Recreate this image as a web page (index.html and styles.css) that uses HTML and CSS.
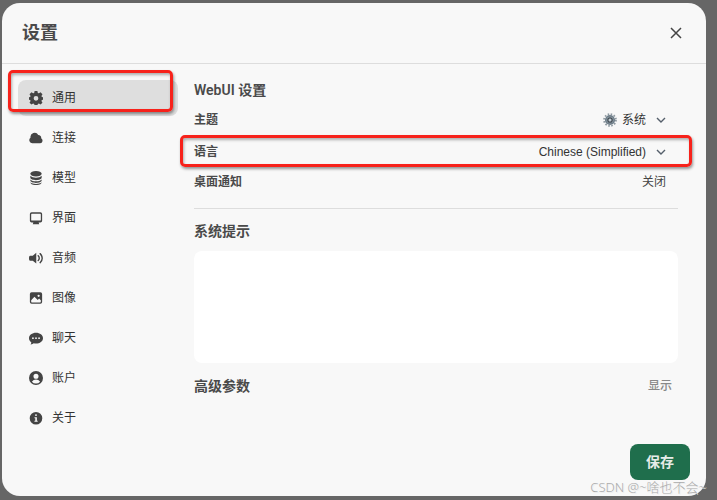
FILE: index.html
```html
<!DOCTYPE html>
<html lang="zh-CN">
<head>
    <meta charset="UTF-8">
    <meta name="viewport" content="width=device-width, initial-scale=1.0">
    <title>设置</title>
    <link rel="stylesheet" href="styles.css">
</head>
<body>
    <main class="modal">
        <header class="modal-header">
            <h1>设置</h1>
            <button class="close" type="button" aria-label="关闭">
                <svg viewBox="0 0 20 20" width="20" height="20"><path d="M5 5l10 10M15 5L5 15" fill="none" stroke="currentColor" stroke-width="1.500"/></svg>
            </button>
        </header>

        <div class="modal-body">
            <nav class="tabs">
                <button class="tab active" type="button">
                    <svg viewBox="0 0 16 16"><path fill-rule="evenodd" d="M6.400 0h3.200l.5 2.200 1.200.5L13.200 1.500l2.200 2.200-1.200 1.900.5 1.200 1.300.3v2.800l-1.300.3-.5 1.200 1.200 1.900-2.200 2.200-1.900-1.200-1.200.5-.5 1.700H6.400l-.5-1.700-1.200-.5-1.900 1.200-2.200-2.200 1.200-1.900-.5-1.200L0 9.900V7.100l1.300-.3.5-1.200L.6 3.700l2.200-2.200 1.900 1.200 1.200-.5zM8 5.700a2.700 2.700 0 1 0 0 5.400 2.700 2.700 0 0 0 0-5.400z"/></svg>
                    通用
                    <span class="mark mark-tab"></span>
                </button>
                <button class="tab" type="button">
                    <svg viewBox="0 0 16 16"><path d="M4 14a3.600 3.600 0 0 1-2.300-6.400A4.800 4.800 0 0 1 10.600 4.500a3.300 3.300 0 0 1 3.300 3.900A3 3 0 0 1 12.800 14z"/></svg>
                    连接
                </button>
                <button class="tab" type="button">
                    <svg viewBox="0 0 16 16"><ellipse cx="8" cy="3.200" rx="6.500" ry="3.200"/><path d="M1.500 5.500c2.500 3 10.500 3 13 0v2c0 4-13 4-13 0zM1.500 9.700c2.500 2.800 10.500 2.800 13 0v1c0 4-13 4-13 0zM1.500 12.900c2.500 2.500 10.500 2.500 13 0 0 4.200-13 4.200-13 0z"/></svg>
                    模型
                </button>
                <button class="tab" type="button">
                    <svg viewBox="0 0 16 16"><path fill-rule="evenodd" d="M3 1.500h10a2 2 0 0 1 2 2V11a2 2 0 0 1-2 2h-2l.7 2H4.300L5 13H3a2 2 0 0 1-2-2V3.500a2 2 0 0 1 2-2zm.2 1.700a.7.7 0 0 0-.7.7v6.300a.7.7 0 0 0 .7.7h9.600a.7.7 0 0 0 .7-.7V3.900a.7.7 0 0 0-.7-.7z"/></svg>
                    界面
                </button>
                <button class="tab" type="button">
                    <svg viewBox="0 0 16 16"><path d="M8.300 2v12.300L4.300 11H1.200C.4 11 0 9.800 0 8.200s.4-2.900 1.200-2.900h3.100z"/><path d="M10.500 5.500c1.600 1.500 1.600 3.800 0 5.300M12.700 3c3.200 3 3.200 7.300 0 10.300" fill="none" stroke="currentColor" stroke-width="1.600" stroke-linecap="round"/></svg>
                    音频
                </button>
                <button class="tab" type="button">
                    <svg viewBox="0 0 16 16"><path fill-rule="evenodd" d="M3 1.500h10a2 2 0 0 1 2 2v9a2 2 0 0 1-2 2H3a2 2 0 0 1-2-2v-9a2 2 0 0 1 2-2zm-.5 9.200v1.600c0 .4.300.7.700.7h9.600c.4 0 .7-.3.700-.7v-1.600l-2-2-1.500 1.500-3.800-3.600zM11 4.200A1.300 1.300 0 1 0 11 6.800 1.300 1.300 0 0 0 11 4.200z"/></svg>
                    图像
                </button>
                <button class="tab" type="button">
                    <svg viewBox="0 0 16 16"><path fill-rule="evenodd" d="M8 2c4.400 0 8 2.700 8 6.200s-3.600 6.200-8 6.200c-.9 0-1.700-.1-2.500-.3-1 .8-2.300 1.300-3.700 1.200.7-.8 1-1.700.8-2.500C1 11.700 0 10 0 8.200 0 4.700 3.600 2 8 2zM4.500 7.200a1 1 0 1 0 0 2 1 1 0 0 0 0-2zm3.500 0a1 1 0 1 0 0 2 1 1 0 0 0 0-2zm3.500 0a1 1 0 1 0 0 2 1 1 0 0 0 0-2z"/></svg>
                    聊天
                </button>
                <button class="tab" type="button">
                    <svg viewBox="0 0 16 16"><path fill-rule="evenodd" d="M8 0a8 8 0 1 1 0 16A8 8 0 0 1 8 0zm0 3a2.900 2.900 0 1 0 0 5.800A2.900 2.900 0 0 0 8 3zM3.300 12.200a6.300 6.300 0 0 0 9.400 0 5.800 5.800 0 0 0-9.400 0z"/></svg>
                    账户
                </button>
                <button class="tab" type="button">
                    <svg viewBox="0 0 16 16"><path fill-rule="evenodd" d="M8 1a7.200 7.200 0 1 1 0 14.400A7.200 7.200 0 0 1 8 1zm0 2.600a1.100 1.100 0 1 0 0 2.200 1.100 1.100 0 0 0 0-2.200zM6.300 7v1.200h.9v2.800h-1v1.200h3.700V11h-.9V7z"/></svg>
                    关于
                </button>
            </nav>

            <form class="panel">
                <div class="settings">
                    <h2>WebUI 设置</h2>
                    <div class="row">
                        <label for="theme">主题</label>
                        <div class="picker">
                            <svg class="gear" viewBox="0 0 16 16" width="14" height="14">
                                <circle cx="8" cy="8" r="6.800" fill="none" stroke="#8c979f" stroke-width="2" stroke-dasharray="1.780 1.780"/>
                                <circle cx="8" cy="8" r="4.800" fill="#a3b0ba" stroke="#71808b" stroke-width="2"/>
                                <circle cx="8" cy="8" r="2.500" fill="#c4ced5" stroke="#424c54" stroke-width="1.500"/>
                            </svg>
                            <select id="theme"><option>系统</option></select>
                            <svg class="chevron" viewBox="0 0 10 10" width="10" height="10"><path d="M1 3l4 4 4-4"/></svg>
                        </div>
                    </div>
                    <div class="row">
                        <label for="language">语言</label>
                        <div class="picker">
                            <select id="language"><option>Chinese (Simplified)</option></select>
                            <svg class="chevron" viewBox="0 0 10 10" width="10" height="10"><path d="M1 3l4 4 4-4"/></svg>
                        </div>
                        <span class="mark mark-row"></span>
                    </div>
                    <div class="row row-short">
                        <label for="notify">桌面通知</label>
                        <button class="toggle" id="notify" type="button">关闭</button>
                    </div>
                    <hr>
                    <h2><label for="prompt">系统提示</label></h2>
                    <textarea id="prompt"></textarea>
                    <div class="advanced">
                        <h2>高级参数</h2>
                        <button class="show" type="button">显示</button>
                    </div>
                </div>
                <button class="save" type="submit">保存</button>
            </form>
        </div>
    </main>
    <div class="watermark">CSDN @~啥也不会~</div>
</body>
</html>
```

FILE: styles.css
```css
* {
    box-sizing: border-box;
}

body {
    display: flex;
    min-height: 100vh;
    margin: 0;
    padding: 3px 11px 4px 2px;
    background: #666;
    color: #444;
    font-family: "Liberation Sans", "Noto Sans CJK SC", sans-serif;
    font-size: 12px;
    line-height: 20px;
}

button,
select,
textarea {
    padding: 0;
    border: none;
    background: none;
    color: inherit;
    font: inherit;
}

button {
    cursor: pointer;
}

h1,
h2 {
    margin: 0;
    font-family: Roboto, "Noto Sans CJK SC", sans-serif;
    font-weight: 600;
    color: #4a4a4a;
}

h1 {
    font-size: 18px;
}

h2 {
    font-size: 14px;
}

.modal {
    flex: 1;
    display: flex;
    flex-direction: column;
    border-radius: 18px;
    background: #f8f8f8;
}

.modal-header {
    display: flex;
    align-items: center;
    justify-content: space-between;
    padding: 20px;
    border-bottom: 1px solid #ddd;
}

.close,
.close svg {
    display: block;
}

.modal-body {
    flex: 1;
    display: flex;
    gap: 16px;
    padding: 16px;
}

/* Sidebar */
.tabs {
    flex: 0 0 160px;
    display: flex;
    flex-direction: column;
    gap: 4px;
}

.tab {
    position: relative;
    display: flex;
    align-items: center;
    gap: 9px;
    height: 36px;
    padding: 0 11px;
    border-radius: 8px;
    color: #333;
}

.tab svg {
    width: 14px;
    height: 14px;
    fill: #444;
    color: #444;
}

.tab.active {
    background: #dedede;
}

/* Red highlight frames */
.mark {
    position: absolute;
    border: 3px solid #f7221b;
    border-radius: 5px;
    box-shadow: 1px 2px 3px rgba(0, 0, 0, 0.4), inset 1px 2px 3px rgba(0, 0, 0, 0.3);
    pointer-events: none;
}

.mark-tab {
    inset: -10px 5px 4px -10px;
}

.mark-row {
    inset: -1px -14px 1px;
}

/* Settings */
.panel {
    flex: 1;
    display: flex;
    flex-direction: column;
    justify-content: space-between;
}

.settings {
    display: flex;
    flex-direction: column;
    padding-right: 12px;
}

.row {
    position: relative;
    display: flex;
    align-items: center;
    justify-content: space-between;
    height: 32px;
    padding-right: 12px;
}

h2 + .row {
    margin-top: 4px;
}

.row-short {
    height: 28px;
}

.row label {
    color: #4a4a4a;
    font-weight: 600;
}

.picker {
    display: flex;
    align-items: center;
    color: #333;
}

.picker select {
    appearance: none;
    margin-right: 10px;
    text-align: right;
}

.gear {
    margin-right: 4px;
}

.chevron {
    fill: none;
    stroke: #555f6b;
    stroke-width: 1.4;
}

hr {
    width: 100%;
    margin: 12px 0;
    border: none;
    border-top: 1px solid #ddd;
}

textarea {
    height: 112px;
    margin: 10px 0 13px;
    padding: 12px;
    border-radius: 8px;
    background: #fff;
    resize: none;
}

.advanced {
    display: flex;
    justify-content: space-between;
    padding-right: 6px;
}

.show {
    color: #888;
    font-weight: 500;
}

.save {
    align-self: flex-end;
    padding: 8px 16px;
    border-radius: 8px;
    background: #1f6e4c;
    color: #e6ece9;
    font-size: 14px;
    font-weight: 600;
}

.watermark {
    position: absolute;
    right: 11px;
    bottom: 3px;
    color: #aaa;
    font-family: "Noto Sans", "Noto Sans CJK SC", sans-serif;
    font-size: 13px;
    font-weight: 300;
    text-shadow: 1px 1px 0 #eee;
}
```
